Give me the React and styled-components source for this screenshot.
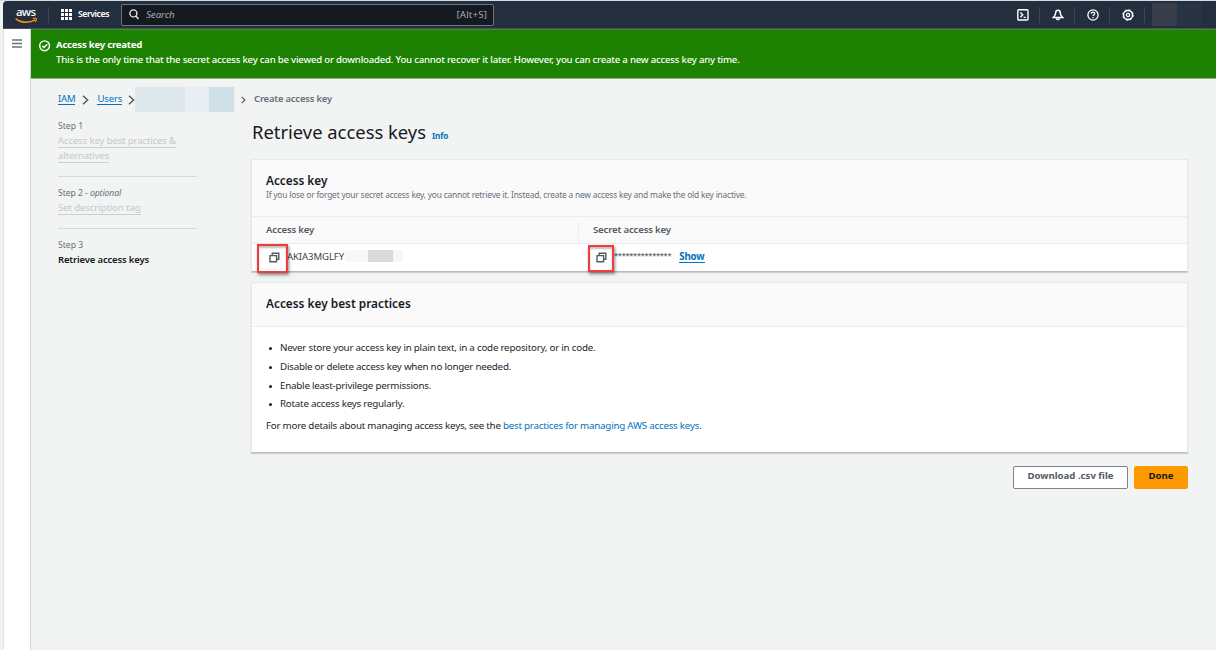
import React from "react";
import styled, { createGlobalStyle } from "styled-components";

const Global = createGlobalStyle`
  *{box-sizing:border-box}
  body{margin:0;background:#f2f3f3;font-family:"Noto Sans","Open Sans",sans-serif;color:#16191f}
  ul,h1,h2,p{margin:0;padding:0}
  svg{display:block;flex:none}
`;

const Text = styled.span`
  display:block;
  white-space:nowrap;
  font-size:${p => p.$size}px;
  line-height:${p => p.$lh || 14}px;
  font-weight:${p => p.$weight || 400};
  letter-spacing:${p => p.$ls || 0}px;
  color:${p => p.$color || "#16191f"};
`;
const Gap = styled.i`width:${p => p.$w}px;flex:none;`;

const Window = styled.div`
  width:1216px;height:650px;overflow:hidden;
  display:flex;flex-direction:column;
  background:#f0f2f2;
  border-top:1px solid #d5dbdb;
  padding-left:3px;
`;
const TopBar = styled.header`
  height:28px;flex:none;display:flex;align-items:center;
  background:#232f3e;border-top-left-radius:4px;
  border-bottom:1px solid #4b4f66;
`;
const LogoBox = styled.div`
  width:45px;height:27px;flex:none;padding-left:11px;display:flex;align-items:center;
`;
const Divider = styled.i`
  width:1px;height:16px;background:#3d4856;flex:none;
`;
const Services = styled.div`
  display:flex;align-items:center;gap:5px;width:72px;padding-left:12px;
`;
const SearchBox = styled.div`
  width:373px;height:22px;border:1px solid #6b7480;border-radius:2px;background:#16191f;
  display:flex;align-items:center;padding:0 6px 0 7px;
`;
const SearchHint = styled(Text)`font-style:italic;margin-left:7px;flex:1;`;
const Tools = styled.div`margin-left:auto;display:flex;align-items:center;`;
const Tool = styled.div`
  width:34px;height:24px;display:flex;align-items:center;justify-content:center;padding-left:1px;
`;
const Account = styled.div`
  display:flex;margin-left:7px;width:64px;height:23px;
  i{width:25px;background:#373d49}
  i + i{background:#283443}
`;
const Body = styled.div`display:flex;flex:1;min-height:0;`;
const Rail = styled.aside`
  width:28px;flex:none;background:#fff;border-left:1px solid #e3e5e5;border-right:1px solid #d1d7d7;
  padding:10px 0 0 8px;
`;
const Page = styled.div`flex:1;background:#f2f3f3;min-width:0;`;
const Flash = styled.div`
  height:50px;background:#1d8102;border-top:1px solid #3f8a2c;border-bottom:1px solid #8fae89;
  display:flex;padding:8px 0 0 8px;gap:5px;
  svg{margin-top:2px}
`;
const Crumbs = styled.nav`
  height:25px;margin-top:8px;padding-left:27px;display:flex;align-items:center;
  > span{margin-bottom:2px}
`;
const Linked = styled(Text)`
  border-bottom:1px solid currentColor;
  line-height:11px;
`;
const Masked = styled.div`
  display:flex;width:99px;height:25px;
  i{width:50px;background:#dde7ec}
  i:nth-child(2){width:24px;background:#e8eef1}
  i:nth-child(3){width:25px;background:#cfdfe8}
`;
const Columns = styled.div`display:flex;padding-left:27px;`;
const Steps = styled.ol`
  list-style:none;margin:7px 0 0;padding:0;width:139px;flex:none;
`;
const Step = styled.li`
  height:${p => p.$h}px;
  margin-bottom:${p => (p.$last ? 0 : 9)}px;
  border-bottom:${p => (p.$last ? 0 : 1)}px solid #d5dbdb;
`;
const StepLink = styled(Text)`
  span{border-bottom:1px solid #cdd0d0;display:inline-block;line-height:13px;height:14px}
`;
const Main = styled.main`width:937px;margin-left:54px;`;
const TitleRow = styled.div`display:flex;align-items:baseline;gap:6px;height:47px;padding:7px 0 0 1px;`;
const Card = styled.section`
  background:#fff;border:1px solid #e6e9e9;border-bottom:1px solid #b5bbbb;
  box-shadow:0 1px 1px rgba(0,28,36,.15);
  margin-bottom:${p => p.$gap}px;height:${p => p.$h}px;
`;
const CardHead = styled.div`
  background:#fafafa;border-bottom:1px solid #eaeded;height:${p => p.$h}px;padding:12px 14px 0;
`;
const HeadRow = styled.div`
  display:flex;align-items:center;height:27px;background:#fafafa;border-bottom:1px solid #eaeded;
`;
const Cell = styled.div`
  display:flex;align-items:center;position:relative;
  width:${p => p.$w};padding-left:${p => p.$pad}px;
`;
const ColumnRule = styled.i`width:1px;height:14px;background:#eaeded;`;
const DataRow = styled.div`
  display:flex;align-items:center;height:27px;
  span{margin-bottom:2px}
`;
const Mark = styled.i`
  position:absolute;left:${p => p.$x}px;top:${p => p.$y}px;width:${p => p.$w}px;height:${p => p.$h}px;
  border:2px solid #f03c3c;box-shadow:1px 2px 3px rgba(0,0,0,.45),inset 0 2px 2px rgba(0,0,0,.25);
`;
const KeyMask = styled.div`
  display:flex;height:12px;margin:0 0 3px 1px;
  i{width:23px;background:#f7f7f7}
  i:nth-child(2){width:25px;background:#d9d9d9}
  i:nth-child(3){width:10px}
`;
const Stars = styled(Text)`padding-bottom:3px;`;
const Bullets = styled.ul`
  list-style:none;padding:12px 0 0 14px;
  li{display:flex;align-items:center;height:18.7px}
  li::before{content:"";width:3px;height:3px;border-radius:50%;background:#16191f;margin:1px 8px 0 3px}
`;
const Note = styled.div`display:flex;padding:5px 0 0 14px;`;
const Actions = styled.div`display:flex;justify-content:flex-end;gap:6px;`;
const Button = styled.button`
  width:${p => p.$w}px;height:23px;padding:0 0 3px;border-radius:2px;
  display:flex;align-items:center;justify-content:center;
  border:1px solid ${p => (p.$primary ? "#ff9900" : "#7b848c")};
  background:${p => (p.$primary ? "#ff9900" : "#fff")};
  font-family:inherit;
`;

const stroke = { fill: "none", stroke: "currentColor" };
const Chevron = ({ w = 7, h = 10 }) => (
  <svg width={w} height={h} viewBox="0 0 7 10" {...stroke} color="#545b64" strokeWidth="1.5"><path d="M1 .8 5.6 5 1 9.2" /></svg>
);
const AwsLogo = () => (
  <svg width="25" height="26" viewBox="0 0 25 26">
    <text x="12" y="14" textAnchor="middle" fontFamily="Noto Sans, sans-serif" fontSize="11.5" fontWeight="500" textLength="20" fill="#fff">aws</text>
    <path d="M1.600 16.600C7 21.200 15.500 21.100 21.200 17.800" fill="none" stroke="#f90" strokeWidth="1.500" />
    <path d="M18.800 16.600c1.800-.6 3.300-.5 3.600 0 .3.700-.2 2.100-1.200 3.200" fill="none" stroke="#f90" strokeWidth="1.100" />
  </svg>
);
const Grid = () => (
  <svg width="12" height="12" viewBox="0 0 12 12" fill="#fff">
    {[0, 4, 8].map(y => [0, 4, 8].map(x => <rect key={x + "-" + y} x={x} y={y} width="3" height="3" />))}
  </svg>
);
const Magnifier = () => (
  <svg width="10" height="11" viewBox="0 0 10 11" {...stroke} color="#e4e7ea" strokeWidth="1.4"><circle cx="4.4" cy="4.4" r="3.5" /><path d="m6.8 7 2.7 3" /></svg>
);
const Copy = () => (
  <svg width="11" height="11" viewBox="0 0 11 11" {...stroke} color="#545b64" strokeWidth="1.4"><path d="M3.200 3.200V1.200h6.600v6H8" /><path d="M1 3.600h6.600v6.200H1z" /></svg>
);
const Terminal = () => (
  <svg width="12" height="12" viewBox="0 0 12 12" {...stroke} color="#fff" strokeWidth="1.4"><rect x=".8" y=".8" width="10.2" height="10.2" rx="1" /><path d="m3.4 3.4 2.3 2.4-2.3 2.5M6.6 8.4h2.2" /></svg>
);
const Bell = () => (
  <svg width="12" height="12" viewBox="0 0 12 12" {...stroke} color="#fff" strokeWidth="1.5"><path d="M5.900 1.200C4.400 1.200 3.700 2.400 3.700 3.700 3.700 5.800 3 6.700 1.400 8.400h9.200C9 6.700 8.200 5.800 8.200 3.700 8.200 2.400 7.400 1.200 5.900 1.200Z" /><path d="M4.400 9c.2 2.400 2.900 2.400 3.100 0" /></svg>
);
const Help = () => (
  <svg width="12" height="12" viewBox="0 0 12 12" {...stroke} color="#fff" strokeWidth="1.3"><circle cx="6" cy="6" r="5.100" /><path d="M4.300 4.700C4.300 2.700 7.700 2.700 7.700 4.600 7.700 5.700 6 5.700 6 7.100M6 8v1.200" /></svg>
);
const Gear = () => (
  <svg width="12" height="12" viewBox="0 0 12 12" {...stroke} color="#fff"><circle cx="6" cy="6" r="4.500" strokeWidth="1.400" /><circle cx="6" cy="6" r="5.300" strokeWidth="1" strokeDasharray="2.100 2.062" /><circle cx="6" cy="6" r="1.600" strokeWidth="1.300" /></svg>
);
const Check = () => (
  <svg width="12" height="12" viewBox="0 0 12 12" {...stroke} color="#fff" strokeWidth="1.400"><circle cx="5.600" cy="5.800" r="4.900" /><path d="m3.200 5.800 1.800 1.800 3.200-3.300" /></svg>
);
const Menu = () => (
  <svg width="11" height="9" viewBox="0 0 11 9" {...stroke} color="#687078" strokeWidth="1.400"><path d="M0 1h10M0 4.500h10M0 8h10" /></svg>
);

const rules = [
  "Never store your access key in plain text, in a code repository, or in code.",
  "Disable or delete access key when no longer needed.",
  "Enable least-privilege permissions.",
  "Rotate access keys regularly.",
];

export default function App() {
  return (
    <Window>
      <Global />
      <TopBar>
        <LogoBox><AwsLogo /></LogoBox>
        <Divider />
        <Services><Grid /><Text $size={8.7} $weight={600} $ls={-0.45} $lh={13} $color="#fff">Services</Text></Services>
        <SearchBox>
          <Magnifier />
          <SearchHint $size={9.8} $ls={-0.1} $color="#a3abb3">Search</SearchHint>
          <Text $size={9.8} $ls={0.1} $color="#a3abb3">[Alt+S]</Text>
        </SearchBox>
        <Tools>
          <Tool><Terminal /></Tool><Divider />
          <Tool><Bell /></Tool><Divider />
          <Tool><Help /></Tool><Divider />
          <Tool><Gear /></Tool><Divider />
          <Account><i /><i /></Account>
        </Tools>
      </TopBar>
      <Body>
        <Rail><Menu /></Rail>
        <Page>
          <Flash>
            <Check />
            <div>
              <Text $size={9.6} $weight={700} $ls={-0.24} $color="#fff">Access key created</Text>
              <Text $size={9.6} $weight={500} $ls={-0.205} $lh={15} $color="#fff">This is the only time that the secret access key can be viewed or downloaded. You cannot recover it later. However, you can create a new access key any time.</Text>
            </div>
          </Flash>
          <Crumbs>
            <Linked $size={9.6} $ls={-0.2} $color="#0073bb">IAM</Linked>
            <Gap $w={7} /><Chevron /><Gap $w={8} />
            <Linked $size={9.6} $ls={-0.2} $color="#0073bb">Users</Linked>
            <Gap $w={6} /><Chevron />
            <Masked><i /><i /><i /></Masked>
            <Gap $w={7} /><Chevron w={5} h={8} /><Gap $w={8} />
            <Text $size={9.4} $weight={600} $ls={-0.16} $color="#687078">Create access key</Text>
          </Crumbs>
          <Columns>
            <Steps>
              <Step $h={58}>
                <Text $size={8.6} $color="#687078">Step 1</Text>
                <StepLink $size={9.6} $ls={-0.14} $color="#c6c9cb" $lh={15}><span>Access key best practices &amp;</span><br /><span>alternatives</span></StepLink>
              </Step>
              <Step $h={43}>
                <Text $size={8.6} $ls={-0.05} $color="#687078">Step 2 - <em>optional</em></Text>
                <StepLink $size={9.6} $ls={-0.1} $color="#c6c9cb" $lh={15}><span>Set description tag</span></StepLink>
              </Step>
              <Step $h={40} $last>
                <Text $size={8.6} $color="#687078">Step 3</Text>
                <Text $size={9.5} $weight={600} $ls={-0.16} $lh={16}>Retrieve access keys</Text>
              </Step>
            </Steps>
            <Main>
              <TitleRow>
                <Text as="h1" $size={18.4} $lh={26}>Retrieve access keys</Text>
                <Text $size={8.2} $weight={700} $ls={-0.15} $color="#0073bb">Info</Text>
              </TitleRow>
              <Card $h={113} $gap={10}>
                <CardHead $h={57}>
                  <Text as="h2" $size={11.8} $weight={600} $ls={0} $lh={16}>Access key</Text>
                  <Text $size={8.4} $ls={-0.2} $lh={14} $color="#687078">If you lose or forget your secret access key, you cannot retrieve it. Instead, create a new access key and make the old key inactive.</Text>
                </CardHead>
                <HeadRow>
                  <Cell $w="326px" $pad={14}><Text $size={9.6} $weight={600} $ls={-0.19} $color="#545b64">Access key</Text></Cell>
                  <ColumnRule />
                  <Cell $w="auto" $pad={14}><Text $size={9.6} $weight={600} $ls={-0.17} $color="#545b64">Secret access key</Text></Cell>
                </HeadRow>
                <DataRow>
                  <Cell $w="326px" $pad={17}>
                    <Copy /><Gap $w={7} />
                    <Text $size={9.6} $ls={-0.1} $color="#3c434b">AKIA3MGLFY</Text>
                    <KeyMask><i /><i /><i /></KeyMask>
                    <Mark $x={5} $y={-6} $w={31} $h={29} />
                  </Cell>
                  <Cell $w="auto" $pad={18}>
                    <Copy /><Gap $w={7} />
                    <Stars $size={7.4} $ls={-0.19} $weight={700} $color="#687078">***************</Stars>
                    <Gap $w={8} />
                    <Linked $size={9.8} $weight={700} $ls={-0.2} $color="#0073bb">Show</Linked>
                    <Mark $x={10} $y={-3} $w={26} $h={27} />
                  </Cell>
                </DataRow>
              </Card>
              <Card $h={171} $gap={13}>
                <CardHead $h={44}>
                  <Text as="h2" $size={11.8} $weight={600} $ls={0.02} $lh={17}>Access key best practices</Text>
                </CardHead>
                <Bullets>
                  {rules.map(r => <li key={r}><Text $size={9.8} $ls={-0.235} $color="#23272e">{r}</Text></li>)}
                </Bullets>
                <Note>
                  <Text $size={9.8} $ls={-0.25} $color="#23272e">For more details about managing access keys, see the&nbsp;</Text>
                  <Text $size={9.8} $ls={-0.245} $color="#0073bb">best practices for managing AWS access keys</Text>
                  <Text $size={9.8} $color="#23272e">.</Text>
                </Note>
              </Card>
              <Actions>
                <Button $w={115}><Text $size={9.6} $weight={700} $color="#545b64">Download .csv file</Text></Button>
                <Button $w={54} $primary><Text $size={9.6} $weight={700}>Done</Text></Button>
              </Actions>
            </Main>
          </Columns>
        </Page>
      </Body>
    </Window>
  );
}
